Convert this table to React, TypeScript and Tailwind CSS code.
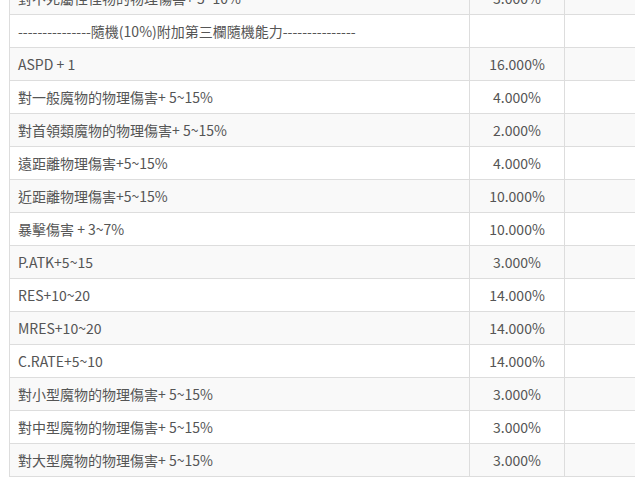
import React from "react";

const rows: [string, string][] = [
  ["對不死屬性怪物的物理傷害+ 5~10%", "3.000%"],
  ["---------------隨機(10%)附加第三欄隨機能力---------------", ""],
  ["ASPD + 1", "16.000%"],
  ["對一般魔物的物理傷害+ 5~15%", "4.000%"],
  ["對首領類魔物的物理傷害+ 5~15%", "2.000%"],
  ["遠距離物理傷害+5~15%", "4.000%"],
  ["近距離物理傷害+5~15%", "10.000%"],
  ["暴擊傷害 + 3~7%", "10.000%"],
  ["P.ATK+5~15", "3.000%"],
  ["RES+10~20", "14.000%"],
  ["MRES+10~20", "14.000%"],
  ["C.RATE+5~10", "14.000%"],
  ["對小型魔物的物理傷害+ 5~15%", "3.000%"],
  ["對中型魔物的物理傷害+ 5~15%", "3.000%"],
  ["對大型魔物的物理傷害+ 5~15%", "3.000%"],
];

export default function App() {
  return (
    <div
      className="w-[635px] h-[491px] overflow-hidden bg-white"
      style={{ fontFamily: '"Noto Sans CJK TC", "Noto Sans", sans-serif' }}
    >
      <div className="-mt-[19px] ml-[9px] w-[720px] border-t border-[#dddddd] text-[14px] text-[#555555]">
        {rows.map(([a, b], i) => (
          <div
            key={i}
            className={`flex h-[33px] border-b border-[#dddddd] ${i % 2 === 0 ? "bg-[#f9f9f9]" : "bg-white"}`}
          >
            <div className="w-[460px] shrink-0 border-l border-[#dddddd] pl-[8px] flex items-center whitespace-nowrap overflow-hidden">
              {a}
            </div>
            <div className="w-[95px] shrink-0 border-l border-[#dddddd] flex items-center justify-center whitespace-nowrap">
              {b}
            </div>
            <div className="flex-1 border-l border-[#dddddd] border-r"></div>
          </div>
        ))}
      </div>
    </div>
  );
}
